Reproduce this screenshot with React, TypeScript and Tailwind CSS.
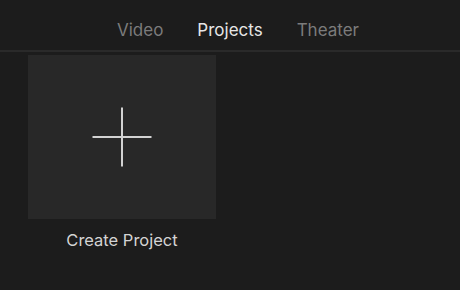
export default function App() {
  const tabs = [
    { label: 'Video', active: false },
    { label: 'Projects', active: true },
    { label: 'Theater', active: false },
  ];

  return (
    <div
      className="w-[460px] h-[290px] bg-[#1c1c1c] flex flex-col"
      style={{ fontFamily: 'Inter, "Noto Sans", sans-serif' }}
    >
      <div className="h-[50px] flex items-center justify-center gap-[34px] pl-[16px] pt-[10px]">
        {tabs.map((t) => (
          <span
            key={t.label}
            className={`text-[17px] leading-none ${t.active ? 'text-[#e6e6e6]' : 'text-[#7b7b7b]'}`}
          >
            {t.label}
          </span>
        ))}
      </div>
      <div className="h-[2px] bg-[#2a2a2a]" />

      <div className="pl-[28px] pt-[3px]">
        <div className="w-[188px] flex flex-col items-center">
          <div className="w-[188px] h-[164px] bg-[#282828] flex items-center justify-center">
            <svg width="60" height="60" viewBox="0 0 60 60">
              <path d="M30 0.5V59.5M0.5 30H59.5" stroke="#d2d2d2" strokeWidth="2" fill="none" />
            </svg>
          </div>
          <span className="mt-[13px] text-[16.5px] leading-none text-[#d4d4d4]">Create Project</span>
        </div>
      </div>
    </div>
  );
}
